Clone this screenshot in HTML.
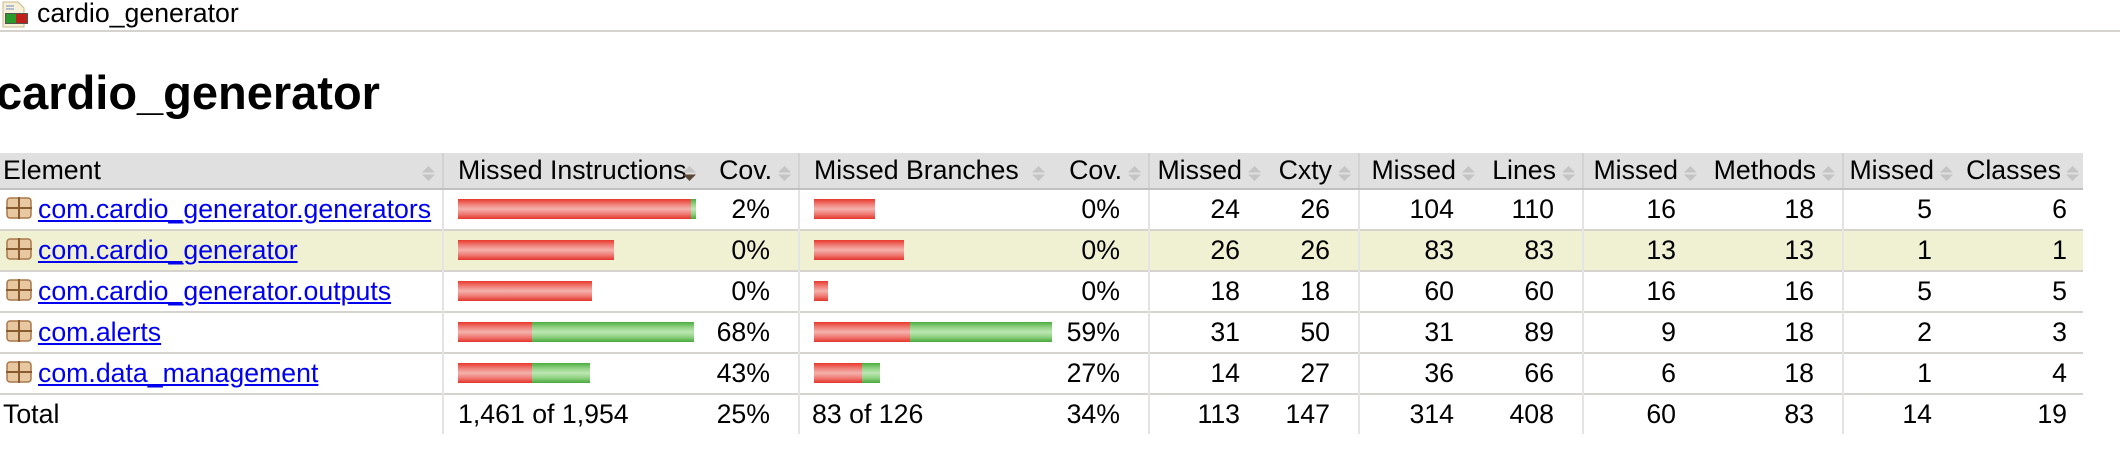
<!DOCTYPE html>
<html><head><meta charset="utf-8"><style>
body{margin:0;width:2120px;height:462px;overflow:hidden;background:#fff;font-family:"Liberation Sans",Arial,sans-serif;color:#000;position:relative}
.bc{position:absolute;left:0;top:0;width:2120px;height:30px;border-bottom:2px solid #d6d3ce}
.bc span{position:absolute;left:37px;top:-2px;font-size:26.7px;line-height:30px}
h1{position:absolute;left:-4px;top:65px;margin:0;font-size:47px;font-weight:bold;line-height:56px}
table{position:absolute;left:0;top:153px;border-collapse:collapse;table-layout:fixed;font-size:26.7px;width:2083px}
th{background:#e0e0e0;font-weight:normal;text-align:left;height:35px;padding:0 0 0 14px;border-bottom:2px solid #c0c0c0;position:relative;white-space:nowrap;overflow:hidden}
th:first-child{padding-left:3px}
td{height:39px;padding:0;border-top:2px solid #d6d3ce;white-space:nowrap;position:relative}
tr.r1 td{border-top:none}
tr.hl td{background:#f0f0d2}
.g{border-left:2px solid #e4e4e4}
th.g{border-left:2px solid #d2d2d2}
.n{text-align:right;padding-right:28px}
th.n{text-align:right;padding-right:26px;padding-left:0}
.s{position:absolute;right:6px;top:13px;width:15px;height:15px}
a{color:#0000ee;text-decoration:underline}
.pk{display:inline-block;vertical-align:middle;margin:0 6px 0 6px;position:relative;top:-3px}
.bar{position:absolute;left:14px;top:9px;height:20px;display:flex}
.red{height:20px;background:linear-gradient(#e8372b 0%,#ef7b74 25%,#f4b1ac 50%,#ef7b74 75%,#e3352a 100%)}
.grn{height:20px;background:linear-gradient(#4aad3e 0%,#8fd182 25%,#bde6b2 50%,#8fd182 75%,#47a83a 100%)}
</style></head><body>
<div class="bc"><svg style="position:absolute;left:1px;top:1px" width="28" height="27" viewBox="0 0 28 27"><path d="M2 1h15l6 6v19H2z" fill="#f6f0d8" stroke="#c8b88a"/><path d="M5 5h8M5 8h8" stroke="#8aa0c8" stroke-width="1.2"/><rect x="5" y="13" width="10" height="9" fill="#2a9a2a"/><rect x="15" y="13" width="11" height="9" fill="#c0201a"/><rect x="4.5" y="12.5" width="22" height="10" fill="none" stroke="#555"/></svg><span>cardio_generator</span></div>
<h1>cardio_generator</h1>
<svg width="0" height="0" style="position:absolute"><defs>
<g id="s"><path d="M1 6.5L7.5 0L14 6.5z" fill="#c4c4c4"/><path d="M1 8.5L7.5 15L14 8.5z" fill="#c4c4c4"/></g>
<g id="sd"><path d="M1 6.5L7.5 0L14 6.5z" fill="#c4c4c4"/><path d="M1 8.5L7.5 15L14 8.5z" fill="#5a4636"/></g>
<g id="p"><rect x="1" y="1" width="24" height="20" rx="3" fill="#e8c8a0" stroke="#a8784a" stroke-width="1.5"/><path d="M13 -1v24M0 11h26" stroke="#8a5a30" stroke-width="2"/></g>
</defs></svg>
<table>
<colgroup><col style="width:443px"><col style="width:260px"><col style="width:96px"><col style="width:253px"><col style="width:97px"><col style="width:119px"><col style="width:91px"><col style="width:123px"><col style="width:101px"><col style="width:121px"><col style="width:139px"><col style="width:117px"><col style="width:123px"></colgroup>
<tr><th>Element<svg class="s" viewBox="0 0 15 15"><use href="#s"/></svg></th><th class="g">Missed Instructions<svg class="s" viewBox="0 0 15 15"><use href="#sd"/></svg></th><th class="n">Cov.<svg class="s" viewBox="0 0 15 15"><use href="#s"/></svg></th><th class="g">Missed Branches<svg class="s" viewBox="0 0 15 15"><use href="#s"/></svg></th><th class="n">Cov.<svg class="s" viewBox="0 0 15 15"><use href="#s"/></svg></th><th class="g n">Missed<svg class="s" viewBox="0 0 15 15"><use href="#s"/></svg></th><th class="n">Cxty<svg class="s" viewBox="0 0 15 15"><use href="#s"/></svg></th><th class="g n">Missed<svg class="s" viewBox="0 0 15 15"><use href="#s"/></svg></th><th class="n">Lines<svg class="s" viewBox="0 0 15 15"><use href="#s"/></svg></th><th class="g n">Missed<svg class="s" viewBox="0 0 15 15"><use href="#s"/></svg></th><th class="n">Methods<svg class="s" viewBox="0 0 15 15"><use href="#s"/></svg></th><th class="g n">Missed<svg class="s" viewBox="0 0 15 15"><use href="#s"/></svg></th><th class="n" style="padding-right:22px">Classes<svg class="s" viewBox="0 0 15 15" style="right:3px"><use href="#s"/></svg></th></tr>
<tr class="r1"><td><svg class="pk" width="26" height="22" viewBox="0 0 26 22"><use href="#p"/></svg><a>com.cardio_generator.generators</a></td><td class="g"><div class="bar"><div class="red" style="width:233px"></div><div class="grn" style="width:5px"></div></div></td><td class="n">2%</td><td class="g"><div class="bar"><div class="red" style="width:61px"></div></div></td><td class="n">0%</td><td class="g n">24</td><td class="n">26</td><td class="g n">104</td><td class="n">110</td><td class="g n">16</td><td class="n">18</td><td class="g n">5</td><td class="n" style="padding-right:16px">6</td></tr>
<tr class="hl"><td><svg class="pk" width="26" height="22" viewBox="0 0 26 22"><use href="#p"/></svg><a>com.cardio_generator</a></td><td class="g"><div class="bar"><div class="red" style="width:156px"></div></div></td><td class="n">0%</td><td class="g"><div class="bar"><div class="red" style="width:90px"></div></div></td><td class="n">0%</td><td class="g n">26</td><td class="n">26</td><td class="g n">83</td><td class="n">83</td><td class="g n">13</td><td class="n">13</td><td class="g n">1</td><td class="n" style="padding-right:16px">1</td></tr>
<tr><td><svg class="pk" width="26" height="22" viewBox="0 0 26 22"><use href="#p"/></svg><a>com.cardio_generator.outputs</a></td><td class="g"><div class="bar"><div class="red" style="width:134px"></div></div></td><td class="n">0%</td><td class="g"><div class="bar"><div class="red" style="width:14px"></div></div></td><td class="n">0%</td><td class="g n">18</td><td class="n">18</td><td class="g n">60</td><td class="n">60</td><td class="g n">16</td><td class="n">16</td><td class="g n">5</td><td class="n" style="padding-right:16px">5</td></tr>
<tr><td><svg class="pk" width="26" height="22" viewBox="0 0 26 22"><use href="#p"/></svg><a>com.alerts</a></td><td class="g"><div class="bar"><div class="red" style="width:74px"></div><div class="grn" style="width:162px"></div></div></td><td class="n">68%</td><td class="g"><div class="bar"><div class="red" style="width:96px"></div><div class="grn" style="width:142px"></div></div></td><td class="n">59%</td><td class="g n">31</td><td class="n">50</td><td class="g n">31</td><td class="n">89</td><td class="g n">9</td><td class="n">18</td><td class="g n">2</td><td class="n" style="padding-right:16px">3</td></tr>
<tr><td><svg class="pk" width="26" height="22" viewBox="0 0 26 22"><use href="#p"/></svg><a>com.data_management</a></td><td class="g"><div class="bar"><div class="red" style="width:74px"></div><div class="grn" style="width:58px"></div></div></td><td class="n">43%</td><td class="g"><div class="bar"><div class="red" style="width:48px"></div><div class="grn" style="width:18px"></div></div></td><td class="n">27%</td><td class="g n">14</td><td class="n">27</td><td class="g n">36</td><td class="n">66</td><td class="g n">6</td><td class="n">18</td><td class="g n">1</td><td class="n" style="padding-right:16px">4</td></tr>
<tr><td style="padding-left:3px">Total</td><td class="g" style="padding-left:14px">1,461 of 1,954</td><td class="n">25%</td><td class="g" style="padding-left:12px">83 of 126</td><td class="n">34%</td><td class="g n">113</td><td class="n">147</td><td class="g n">314</td><td class="n">408</td><td class="g n">60</td><td class="n">83</td><td class="g n">14</td><td class="n" style="padding-right:16px">19</td></tr>
</table>
</body></html>
